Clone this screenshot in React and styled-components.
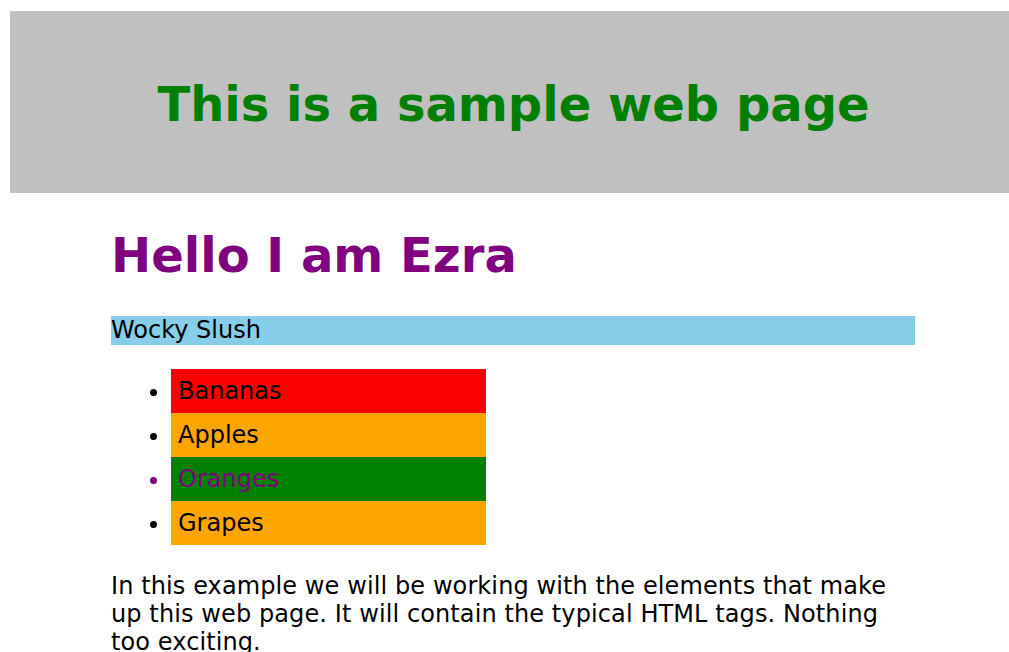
import React from "react";
import styled, { createGlobalStyle } from "styled-components";

const GlobalStyle = createGlobalStyle`
  html, body {
    margin: 0;
    padding: 0;
    background: #ffffff;
  }
  body {
    font-family: "DejaVu Sans", Verdana, sans-serif;
    font-size: 24px;
    color: #000000;
    overflow: hidden;
  }
`;

const Page = styled.div`
  padding-top: 11px;
`;

const Header = styled.header`
  margin-left: 10px;
  width: 999px;
  height: 182px;
  background: #c0c0c0;
  display: flex;
  align-items: center;
  justify-content: center;
  padding: 4px 0 0 8px;
  box-sizing: border-box;
`;

const Title = styled.h1`
  margin: 0;
  font-size: 48px;
  font-weight: bold;
  color: #008000;
`;

const Main = styled.main`
  margin-left: 111px;
  width: 804px;
`;

const Name = styled.h1`
  margin: 34px 0 0;
  font-size: 48px;
  font-weight: bold;
  color: #800080;
`;

const Tagline = styled.p`
  margin: 33px 0 24px;
  background: #87ceeb;
  line-height: 29px;
`;

const List = styled.ul`
  margin: 24px 0;
  padding-left: 60px;
`;

const Item = styled.li`
  width: 315px;
  box-sizing: border-box;
  padding: 8px 0 8px 7px;
  background: ${(p) => p.$bg};
  color: ${(p) => p.$color || "#000000"};
`;

const Text = styled.p`
  margin: 27px 0 24px;
  line-height: 28px;
  letter-spacing: 0.1px;
`;

const fruits = [
  { name: "Bananas", bg: "#ff0000" },
  { name: "Apples", bg: "#ffa500" },
  { name: "Oranges", bg: "#008000", color: "#800080" },
  { name: "Grapes", bg: "#ffa500" },
];

export default function App() {
  return (
    <>
      <GlobalStyle />
      <Page>
        <Header>
          <Title>This is a sample web page</Title>
        </Header>
        <Main>
          <Name>Hello I am Ezra</Name>
          <Tagline>Wocky Slush</Tagline>
          <List>
            {fruits.map((f) => (
              <Item key={f.name} $bg={f.bg} $color={f.color}>
                {f.name}
              </Item>
            ))}
          </List>
          <Text>
            In this example we will be working with the elements that make up
            this web page. It will contain the typical HTML tags. Nothing too
            exciting.
          </Text>
        </Main>
      </Page>
    </>
  );
}
